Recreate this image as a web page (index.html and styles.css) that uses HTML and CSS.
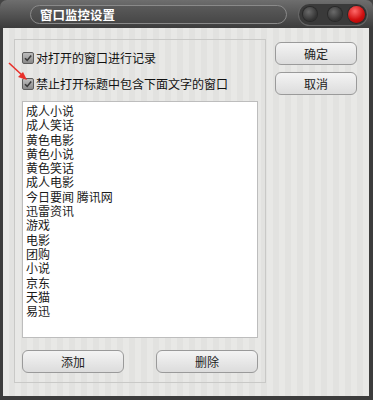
FILE: index.html
```html
<!DOCTYPE html>
<html lang="zh-CN">
<head>
  <meta charset="UTF-8">
  <title>窗口监控设置</title>
  <link rel="stylesheet" href="styles.css">
</head>
<body>
  <div class="window">
    <div class="titlebar">
      <div class="title-pill">窗口监控设置</div>
      <div class="win-btns">
        <span class="dot"></span>
        <span class="dot"></span>
        <span class="dot red"></span>
      </div>
    </div>
    <div class="content">
      <div class="group">
        <label class="chk-row">
          <span class="chk"><svg viewBox="0 0 10 10"><path d="M2 5.2 L4.2 7.4 L8.2 2.6" /></svg></span>
          对打开的窗口进行记录
        </label>
        <label class="chk-row">
          <span class="chk"><svg viewBox="0 0 10 10"><path d="M2 5.2 L4.2 7.4 L8.2 2.6" /></svg></span>
          禁止打开标题中包含下面文字的窗口
        </label>
        <div class="list">
          <div>成人小说</div>
          <div>成人笑话</div>
          <div>黄色电影</div>
          <div>黄色小说</div>
          <div>黄色笑话</div>
          <div>成人电影</div>
          <div>今日要闻 腾讯网</div>
          <div>迅雷资讯</div>
          <div>游戏</div>
          <div>电影</div>
          <div>团购</div>
          <div>小说</div>
          <div>京东</div>
          <div>天猫</div>
          <div>易迅</div>
        </div>
        <div class="btn-row">
          <button class="btn wide">添加</button>
          <button class="btn wide">删除</button>
        </div>
      </div>
      <div class="side">
        <button class="btn">确定</button>
        <button class="btn">取消</button>
      </div>
    </div>
    <svg class="arrow" width="24" height="24" viewBox="0 0 24 24">
      <path d="M1 3 L15 16" stroke="#e8302a" stroke-width="1.6" fill="none" />
      <path d="M19 20 L10 17 L15 12 Z" fill="#e8302a" />
    </svg>
  </div>
</body>
</html>
```

FILE: styles.css
```css
body {
  margin: 0;
  background: #444;
  font-family: "Noto Sans CJK SC", "Noto Sans", sans-serif;
  font-size: 12px;
}
.window {
  position: relative;
  width: 373px;
  height: 400px;
  box-sizing: border-box;
  background: linear-gradient(#6e6e6e, #3c3c3c 28px, #3c3c3c);
  border-radius: 7px 7px 0 0;
  padding: 0 4px 4px 3px;
  display: flex;
  flex-direction: column;
}
.titlebar {
  height: 28px;
  display: flex;
  align-items: center;
  padding-left: 27px;
}
.title-pill {
  width: 257px;
  height: 19px;
  box-sizing: border-box;
  border: 1px solid #8a8a8a;
  border-radius: 10px;
  background: linear-gradient(#5a5a5a, #474747);
  color: #fff;
  font-weight: bold;
  font-size: 12.5px;
  line-height: 17px;
  padding-left: 9px;
  margin-top: 1px;
}
.win-btns {
  margin-left: 12px;
  display: flex;
  align-items: center;
  padding: 2px 2px 2px 4px;
  border-radius: 11px;
  background: #3a3a3a;
  box-shadow: 0 0 0 1px #676767;
}
.dot {
  width: 14px;
  height: 14px;
  border-radius: 50%;
  background: radial-gradient(circle at 40% 35%, #6a6a6a, #333 70%);
  box-shadow: 0 0 0 1px #2a2a2a;
  margin-right: 11px;
}
.dot.red {
  width: 17px;
  height: 17px;
  margin-right: 0;
  margin-left: -5px;
  background: radial-gradient(circle at 40% 30%, #ff6a6a, #d01010 55%, #900 100%);
}
.content {
  flex: 1;
  background: #e6e6e4 repeating-linear-gradient(90deg, #e8e8e6 0 6px, #e2e2e0 6px 12px);
  display: flex;
  align-items: flex-start;
  padding: 11px 0 0 11px;
  gap: 9px;
}
.group {
  width: 252px;
  height: 344px;
  box-sizing: border-box;
  border: 1px solid #c9c9c7;
  padding: 10px 7px 0 7px;
  display: flex;
  flex-direction: column;
}
.chk-row {
  display: flex;
  align-items: center;
  gap: 2px;
  height: 15px;
  margin-bottom: 11px;
  color: #111;
  white-space: nowrap;
}
.chk {
  width: 12px;
  height: 12px;
  box-sizing: border-box;
  border: 1px solid #5e5e5e;
  border-radius: 2px;
  background: linear-gradient(#bdbdbd, #8a8a8a);
  display: flex;
}
.chk svg {
  width: 10px;
  height: 10px;
}
.chk path {
  fill: none;
  stroke: #3a3a3a;
  stroke-width: 1.6;
}
.list {
  height: 237px;
  box-sizing: border-box;
  background: #fff;
  border: 1px solid #bdbdbd;
  padding: 2px 3px;
  line-height: 14.3px;
  color: #1a1a1a;
  margin-top: -1px;
}
.btn-row {
  display: flex;
  justify-content: space-between;
  margin-top: 12px;
}
.btn {
  width: 82px;
  height: 23px;
  border: 1px solid #9a9a9a;
  border-radius: 6px;
  background: linear-gradient(#f4f4f4, #dcdcdc);
  font-family: inherit;
  font-size: 12px;
  color: #222;
  padding: 0;
}
.btn.wide {
  width: 102px;
}
.side {
  display: flex;
  flex-direction: column;
  gap: 7px;
  padding-top: 3px;
}
.arrow {
  position: absolute;
  left: 8px;
  top: 60px;
}
```
